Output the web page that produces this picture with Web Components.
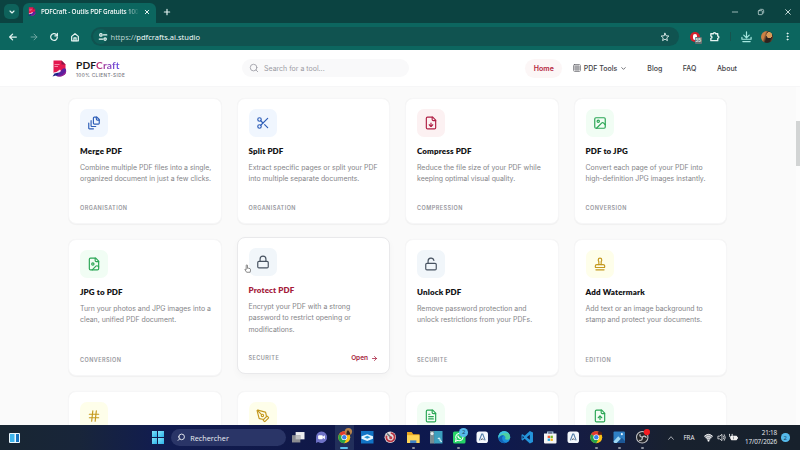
<!DOCTYPE html>
<html lang="fr">
<head>
<meta charset="utf-8">
<title>PDFCraft - Outils PDF Gratuits</title>
<style>
    html, body { margin: 0; height: 100%; overflow: hidden; }
    body {
        display: flex;
        flex-direction: column;
        width: 800px;
        height: 450px;
        font-family: Inter, "Liberation Sans", sans-serif;
        background: #fafafa;
    }
</style>
</head>
<body>
<browser-bar></browser-bar>
<site-header></site-header>
<tool-grid>
    <tool-card icon="merge" tone="blue" tag="ORGANISATION"><span slot="title">Merge PDF</span>Combine multiple PDF files into a single, organized document in just a few clicks.</tool-card>
    <tool-card icon="scissors" tone="blue" tag="ORGANISATION"><span slot="title">Split PDF</span>Extract specific pages or split your PDF into multiple separate documents.</tool-card>
    <tool-card icon="filedown" tone="red" tag="COMPRESSION"><span slot="title">Compress PDF</span>Reduce the file size of your PDF while keeping optimal visual quality.</tool-card>
    <tool-card icon="image" tone="green" tag="CONVERSION"><span slot="title">PDF to JPG</span>Convert each page of your PDF into high-definition JPG images instantly.</tool-card>
    <tool-card icon="fileimage" tone="green" tag="CONVERSION"><span slot="title">JPG to PDF</span>Turn your photos and JPG images into a clean, unified PDF document.</tool-card>
    <tool-card icon="lock" tone="slate" tag="SECURITE" active><span slot="title">Protect PDF</span>Encrypt your PDF with a strong password to restrict opening or modifications.</tool-card>
    <tool-card icon="unlock" tone="slate" tag="SECURITE"><span slot="title">Unlock PDF</span>Remove password protection and unlock restrictions from your PDFs.</tool-card>
    <tool-card icon="stamp" tone="yellow" tag="EDITION"><span slot="title">Add Watermark</span>Add text or an image background to stamp and protect your documents.</tool-card>
    <tool-card icon="hash" tone="yellow"></tool-card>
    <tool-card icon="pen" tone="yellow"></tool-card>
    <tool-card icon="filetext" tone="green"></tool-card>
    <tool-card icon="fileup" tone="green"></tool-card>
</tool-grid>
<task-bar></task-bar>

<script>
const FILE = '<path d="M15 2H6a2 2 0 0 0-2 2v16a2 2 0 0 0 2 2h12a2 2 0 0 0 2-2V7Z"/><path d="M14 2v4a2 2 0 0 0 2 2h4"/>'

// line icons, all on a 24x24 grid
const ICONS = {
    merge: '<path d="M21 7h-3a2 2 0 0 1-2-2V2"/><path d="M21 6v6.500c0 .8-.7 1.500-1.500 1.500h-7c-.8 0-1.500-.7-1.500-1.500v-9c0-.8.7-1.500 1.500-1.500H17Z"/><path d="M7 8v8.800c0 .3.2.6.4.8.2.2.5.4.8.4H15"/><path d="M3 12v8.800c0 .3.2.6.4.8.2.2.5.4.8.4H11"/>',
    scissors: '<circle cx="6" cy="6" r="3"/><path d="M8.120 8.120 12 12"/><path d="M20 4 8.120 15.880"/><circle cx="6" cy="18" r="3"/><path d="M14.800 14.800 20 20"/>',
    filedown: FILE + '<path d="M12 18v-6"/><path d="m9 15 3 3 3-3"/>',
    fileup: FILE + '<path d="M12 12v6"/><path d="m15 15-3-3-3 3"/>',
    filetext: FILE + '<path d="M10 9H8M16 13H8M16 17H8"/>',
    fileimage: FILE + '<circle cx="10" cy="12" r="2"/><path d="m20 17-1.300-1.300a2.400 2.400 0 0 0-3.400 0L9 22"/>',
    image: '<rect x="3" y="3" width="18" height="18" rx="2"/><circle cx="9" cy="9" r="2"/><path d="m21 15-3.090-3.090a2 2 0 0 0-2.820 0L6 21"/>',
    lock: '<rect x="3" y="11" width="18" height="11" rx="2"/><path d="M7 11V7a5 5 0 0 1 10 0v4"/>',
    unlock: '<rect x="3" y="11" width="18" height="11" rx="2"/><path d="M7 11V7a5 5 0 0 1 9.900-1"/>',
    stamp: '<path d="M5 22h14"/><path d="M19.270 13.730A2.500 2.500 0 0 0 17.500 13h-11A2.500 2.500 0 0 0 4 15.500V17a1 1 0 0 0 1 1h14a1 1 0 0 0 1-1v-1.500c0-.66-.26-1.300-.73-1.770Z"/><path d="M14 13V8.500C14 7 15 7 15 5a3 3 0 0 0-6 0c0 2 1 2 1 3.500V13"/>',
    hash: '<path d="M4 9h16M4 15h16M10 3 8 21M16 3l-2 18"/>',
    pen: '<path d="M15.700 21.300a1 1 0 0 1-1.400 0l-1.600-1.600a1 1 0 0 1 0-1.400l5.600-5.600a1 1 0 0 1 1.400 0l1.600 1.600a1 1 0 0 1 0 1.400z"/><path d="m18 13-1.400-6.900a1 1 0 0 0-.7-.8L3.200 2a1 1 0 0 0-1.200 1.200l3.300 12.700a1 1 0 0 0 .8.700L13 18"/><path d="m2.300 2.300 7.300 7.300"/><circle cx="11" cy="11" r="2"/>',
    search: '<circle cx="11" cy="11" r="8"/><path d="m21 21-4.300-4.300"/>',
    grid: '<rect x="2" y="2" width="20" height="20" rx="2"/><path d="M2 9h20M2 15h20M9 2v20M15 2v20"/>',
    down: '<path d="m6 9 6 6 6-6"/>',
    up: '<path d="m5 16 7-8 7 8"/>',
    right: '<path d="M5 12h14M12 5l7 7-7 7"/>',
    back: '<path d="M20 12H4M11 5l-7 7 7 7"/>',
    reload: '<path d="M20 12a8 8 0 1 1-2.500-5.800L20 8.500"/><path d="M20 3v6h-6"/>',
    home: '<path d="M4 10.500 12 4l8 6.500V21H4Z"/><path d="M9.500 21v-7h5v7"/>',
    tune: '<circle cx="7" cy="7" r="3"/><path d="M13 7h8M3 17h8"/><circle cx="17" cy="17" r="3"/>',
    star: '<path d="m12 3 2.700 6.100 6.600.6-5 4.400 1.500 6.500-5.800-3.400-5.800 3.400 1.500-6.500-5-4.400 6.600-.6Z"/>',
    close: '<path d="M5 5l14 14M19 5 5 19"/>',
    plus: '<path d="M12 4v16M4 12h16"/>',
    minus: '<path d="M4 12h16"/>',
    restore: '<rect x="4" y="8" width="12" height="12" rx="2"/><path d="M8 5c1-1 2-1 3-1h5a4 4 0 0 1 4 4v6c0 1 0 1-1 2"/>',
    puzzle: '<path d="M4 6h5.500a2.500 2.500 0 0 1 5 0H19v5a2.500 2.500 0 0 1 0 5v5H4v-5a2.500 2.500 0 0 0 0-5Z"/>',
    download: '<path d="M12 2v12M6 9l6 6 6-6M2 14v4h20v-4M4 23h16"/>',
    dots: '<g fill="currentColor"><circle cx="12" cy="4" r="1.500"/><circle cx="12" cy="12" r="1.500"/><circle cx="12" cy="20" r="1.500"/></g>'
}

class LineIcon extends HTMLElement {
    constructor() {
        super()
        this.attachShadow({ mode: 'open' })
    }
    connectedCallback() {
        const size = this.getAttribute('size') || 14
        const weight = this.getAttribute('weight') || 2
        this.shadowRoot.innerHTML = `<style>
            :host { display: inline-flex; flex: none; width: ${size}px; height: ${size}px; }
            svg { width: 100%; height: 100%; display: block; overflow: visible; }
        </style>
        <svg viewBox="0 0 24 24" fill="none" stroke="currentColor" stroke-width="${weight}" stroke-linecap="round" stroke-linejoin="round">${ICONS[this.getAttribute('name')]}</svg>`
    }
}
customElements.define('line-icon', LineIcon)


class PdfLogo extends HTMLElement {
    constructor() {
        super()
        this.attachShadow({ mode: 'open' }).innerHTML = `<style>
            :host { display: block; flex: none; width: 15px; height: 17px; }
            svg { width: 100%; height: 100%; display: block; }
        </style>
        <svg viewBox="0 0 30 34">
            <path d="M3 1h16l8 8v17H3Z" fill="#e3184f"/>
            <path d="M19 1l8 8h-8Z" fill="#8d1546"/>
            <path d="M5 9h10M5 13h7" stroke="#f9a3ba" stroke-width="1.600"/>
            <path d="M3 26q10 2 18-8 5-3 7 1 2 8-6 12-6 3-13 1Z" fill="#5b1f9e"/>
            <path d="M9 32q13 1 19-11 1 8-7 11-6 2-12 0Z" fill="#9a2294"/>
            <path d="M3 25q7 0 13-6l2 3q-5 6-13 7Z" fill="#f6eefa"/>
            <path d="M1 33l4-6 9-2-3 5Z" fill="#1d2585"/>
        </svg>`
    }
}
customElements.define('pdf-logo', PdfLogo)


class BrowserBar extends HTMLElement {
    constructor() {
        super()
        this.attachShadow({ mode: 'open' }).innerHTML = `<style>
            :host { display: block; flex: none; height: 50px; background: #0b4341; color: #e4f3f1; font-family: "Noto Sans", "Open Sans", sans-serif; }
            .strip { display: flex; align-items: center; height: 23px; box-sizing: border-box; padding: 0 8.500px 0 4px; }
            .tabs { width: 15px; height: 15px; border-radius: 5px; background: #0e625b; display: flex; align-items: center; justify-content: center; }
            .tab { display: flex; align-items: center; align-self: flex-end; box-sizing: border-box; width: 133px; height: 20px; margin-left: 4px; padding: 0 6px 3px 5px; border-radius: 6px 6px 0 0; background: #0c665f; }
            .tab pdf-logo { width: 8px; height: 9px; }
            .name { flex: 1; margin: 0 5px 0 5px; font-size: 6.400px; line-height: 10px; letter-spacing: -.16px; font-weight: 500; white-space: nowrap; color: #fff; -webkit-mask: linear-gradient(90deg, #000 86%, transparent); }
            .plus { margin-left: 7px; }
            .win { margin-left: auto; display: flex; align-items: center; gap: 18.500px; }
            .tools { display: flex; align-items: center; height: 27px; box-sizing: border-box; padding: 0 8px 0 8px; background: #0c665f; }
            .dim { opacity: .45; }
            .nav { display: flex; gap: 10.500px; }
            .url { display: flex; align-items: center; flex: none; width: 588px; height: 19px; box-sizing: border-box; margin-left: 11px; padding: 0 9px 0 2px; border-radius: 10px; background: #105350; font-size: 7.500px; color: #f2fbfa; }
            .site { display: flex; width: 15px; height: 15px; border-radius: 50%; background: #0e605a; align-items: center; justify-content: center; margin-right: 3px; }
            .url b { font-weight: 400; color: #b9d2cf; }
            .url line-icon:last-child { margin-left: auto; }
            .block { position: relative; width: 10px; height: 10px; margin-left: 11px; border-radius: 50%; background: #d5202c; }
            .block::before { content: ""; position: absolute; left: 3px; top: 2px; width: 4px; height: 6px; border-radius: 2px; background: #fff; }
            .block i { position: absolute; left: 5px; top: 5px; padding: 0 1px; font: bold 5px/7px "Liberation Sans", sans-serif; background: #657274; border-radius: 1px; }
            .sep { width: 1px; height: 9px; margin: 0 10px; background: #17534e; }
            .face { width: 12px; height: 12px; margin: 0 10px 0 9px; border-radius: 50%; background: radial-gradient(circle at 70% 35%, #d99b58 0 25%, transparent 27%), linear-gradient(110deg, #cc8044 0 30%, #2d211e 50% 75%, #a66235); }
        </style>
        <div class="strip">
            <div class="tabs"><line-icon name="down" size="8" weight="3.500"></line-icon></div>
            <div class="tab"><pdf-logo></pdf-logo><div class="name">PDFCraft - Outils PDF Gratuits 100</div><line-icon name="close" size="6" weight="4"></line-icon></div>
            <line-icon class="plus" name="plus" size="8" weight="3.500"></line-icon>
            <div class="win"><line-icon name="minus" size="8"></line-icon><line-icon name="restore" size="8"></line-icon><line-icon name="close" size="8" weight="2.500"></line-icon></div>
        </div>
        <div class="tools">
            <div class="nav"><line-icon name="back" size="10" weight="3"></line-icon><line-icon class="dim" name="right" size="10" weight="2.400"></line-icon><line-icon name="reload" size="10" weight="3"></line-icon><line-icon name="home" size="10" weight="3"></line-icon></div>
            <div class="url"><span class="site"><line-icon name="tune" size="10" weight="2.800"></line-icon></span><span><b>https://</b>pdfcrafts.ai.studio</span><line-icon name="star" size="10"></line-icon></div>
            <div class="block"><i>55</i></div>
            <line-icon style="margin-left:9px" name="puzzle" size="11" weight="3"></line-icon>
            <div class="sep"></div>
            <line-icon name="download" size="11" weight="2.600" style="color:#a5e8e0"></line-icon>
            <div class="face"></div>
            <line-icon name="dots" size="9"></line-icon>
        </div>`
    }
}
customElements.define('browser-bar', BrowserBar)


class SiteHeader extends HTMLElement {
    constructor() {
        super()
        this.attachShadow({ mode: 'open' }).innerHTML = `<style>
            :host { display: flex; flex: none; align-items: center; height: 37px; box-sizing: border-box; padding: 0 63px 0 52px; background: #fff; border-bottom: 1px solid #f6f6f7; color: #3f3f46; font-size: 7px; font-weight: 500; }
            .brand { width: 184px; display: flex; align-items: center; gap: 9px; padding-top: 1.500px; }
            .name { font: 700 10.200px/12px Lato, sans-serif; letter-spacing: .1px; color: #18181b; }
            .name span { background: linear-gradient(90deg, #c72a62, #8f43b8 50%, #6453e6); -webkit-background-clip: text; color: transparent; }
            .sub { margin-top: 1px; font-size: 4.700px; line-height: 6px; letter-spacing: .38px; color: #71717a; white-space: nowrap; }
            .search { display: flex; align-items: center; gap: 5px; width: 167px; height: 18px; box-sizing: border-box; margin-left: 6px; padding-left: 7px; border-radius: 9px; background: #f9f9fa; color: #9b9ba3; font-weight: 400; font-size: 7px; }
            nav { margin-left: auto; display: flex; align-items: center; }
            .home { padding: 0 8.500px; line-height: 19px; border-radius: 10px; background: #fcf6f6; color: #b51f3d; font-weight: 600; }
            .drop { display: flex; align-items: center; gap: 2.500px; margin: 0 20px 0 11px; }
            .drop line-icon:last-child { margin-left: .5px; }
            .faq { margin: 0 20.500px; }
        </style>
        <div class="brand"><pdf-logo></pdf-logo><div><div class="name">PDF<span>Craft</span></div><div class="sub">100% CLIENT-SIDE</div></div></div>
        <div class="search"><line-icon name="search" size="10"></line-icon>Search for a tool...</div>
        <nav><span class="home">Home</span><span class="drop"><line-icon name="grid" size="8" weight="1.600"></line-icon>PDF Tools<line-icon name="down" size="7" weight="2.500"></line-icon></span><span>Blog</span><span class="faq">FAQ</span><span>About</span></nav>`
    }
}
customElements.define('site-header', SiteHeader)


class ToolGrid extends HTMLElement {
    constructor() {
        super()
        this.attachShadow({ mode: 'open' }).innerHTML = `<style>
            :host { display: flex; flex: 1; min-height: 0; overflow: hidden; background: #fafafa; }
            .grid { flex: 1; display: grid; grid-template-columns: repeat(4, 153.500px); grid-template-rows: 126px 137px 126px; gap: 15px; align-content: start; padding: 11px 0 0 68px; }
            .scroll { width: 4px; background: #fcfcfc; padding-top: 34px; box-sizing: border-box; }
            .thumb { height: 45px; background: #d2d4d4; }
        </style>
        <div class="grid"><slot></slot></div>
        <div class="scroll"><div class="thumb"></div></div>`
    }
}
customElements.define('tool-grid', ToolGrid)


const TONES = {
    blue: ['#2f5fb8', '#f0f6fe'],
    red: ['#b02045', '#fcf1f2'],
    green: ['#2ba655', '#f1fdf4'],
    slate: ['#475260', '#f1f6fa'],
    yellow: ['#c4991f', '#fefeea']
}

class ToolCard extends HTMLElement {
    constructor() {
        super()
        this.attachShadow({ mode: 'open' })
    }
    connectedCallback() {
        const [ink, tile] = TONES[this.getAttribute('tone')]
        const active = this.hasAttribute('active')
        this.shadowRoot.innerHTML = `<style>
            :host { position: relative; display: flex; flex-direction: column; box-sizing: border-box; padding: 10px 8px 11px 11px; border: 1px solid #f6f6f7; border-radius: 8px; background: #fff; box-shadow: 0 .5px 1px rgba(0,0,0,.04); }
            :host([active]) { top: -2px; border-color: #e9e9eb; box-shadow: 0 3px 7px rgba(0,0,0,.03); }
            .tile { display: flex; align-items: center; justify-content: center; width: 28px; height: 28px; border-radius: 7px; color: ${ink}; background: ${tile}; }
            .title { margin-top: 8px; font: 800 8px/12px Lato, sans-serif; letter-spacing: .13px; color: #121214; white-space: nowrap; }
            :host([active]) .title { color: #a51c3b; }
            .text { margin-top: 5px; font-size: 6.930px; line-height: 11.300px; color: #858589; }
            .foot { display: flex; align-items: center; justify-content: space-between; margin-top: auto; font-size: 5.500px; line-height: 8px; font-weight: 600; letter-spacing: .45px; color: #97979d; }
            .open { display: flex; align-items: center; gap: 3px; margin-right: 3px; font-size: 6.500px; letter-spacing: 0; color: #a51c3b; }
            .hand { position: absolute; left: 6.500px; top: 26px; width: 7px; height: 9.500px; }
        </style>
        <div class="tile"><line-icon name="${this.getAttribute('icon')}" size="14"></line-icon></div>
        <div class="title"><slot name="title"></slot></div>
        <div class="text"><slot></slot></div>
        <div class="foot"><span>${this.getAttribute('tag') || ''}</span>${active ? '<span class="open">Open<line-icon name="right" size="7" weight="2.600"></line-icon></span>' : ''}</div>
        ${active ? '<svg class="hand" viewBox="0 0 16 20"><path d="M5 12V3q0-2 1.500-2T8 3v6q3-1 6 1 1 1 1 3l-1 5H6L2 12q0-2 3 0Z" fill="#fff" stroke="#444" stroke-width="1.400"/></svg>' : ''}`
    }
}
customElements.define('tool-card', ToolCard)


const CHROME = '<circle cx="12" cy="12" r="11.500" fill="#fbc116"/><path d="M12 12 2.200 6a11.500 11.500 0 0 1 19.600 0Z" fill="#e33b2e"/><path d="M12 12 2.200 6A11.500 11.500 0 0 0 12 23.500l4-7.500Z" fill="#27a34b"/><circle cx="12" cy="12" r="5.500" fill="#fff"/><circle cx="12" cy="12" r="4.200" fill="#3b82e8"/>'
const LETTER = '<rect x="1" y="1" width="22" height="22" rx="5" fill="#f4f8fd"/><path d="m6.500 18 4.500-12h2l4.500 12" fill="none" stroke="#5880aa" stroke-width="2.200"/><path d="m9.500 17.500 2.500-3 2.500 3" fill="none" stroke="#38424e" stroke-width="1.500"/>'

// [picture, state] of every pinned app, left to right
const APPS = [
    ['<rect x="7" y="2" width="17" height="14" fill="#eeeeef"/><rect x="0" y="8" width="16" height="14" fill="#8b8c91"/><rect x="7" y="8" width="9" height="8" fill="#bfc0c2"/>'],
    ['<path d="M12 1a11 11 0 1 1-6 20l-4 2V12A11 11 0 0 1 12 1Z" fill="#6f72c6"/><rect x="6" y="8" width="9" height="8" rx="2" fill="#fff"/><path d="m15 11 4-3v8l-4-3Z" fill="#fff"/>'],
    [CHROME + '<circle cx="20" cy="1" r="7" fill="#b7834b"/><path d="M16 7q0-7 3-9 4 3 5 9Z" fill="#31241f"/>', 'on'],
    ['<rect width="24" height="24" fill="#1274c5"/><path d="m1 10 11-4 11 4v5l-11 4-11-4Z" fill="#e3f5ff"/><path d="m6 12 6-3 6 3-6 3Z" fill="#2793d1"/>'],
    ['<circle cx="12" cy="12" r="11" fill="#e3dfe0"/><path d="M5 9a8 8 0 1 0 8-5" fill="none" stroke="#b93543" stroke-width="3.500"/><path d="m6 5 7 7" stroke="#6a7378" stroke-width="3"/><circle cx="13" cy="13" r="3" fill="#c23a47"/>'],
    ['<path d="M0 2h9l3 4h12v17H0Z" fill="#eaa620"/><path d="M0 8h24v15H0Z" fill="#ffd557"/><rect x="6" y="18" width="12" height="5" fill="#3d82c8"/>', 'run'],
    ['<rect width="9" height="24" fill="#7a8c91"/><rect x="8" width="16" height="24" fill="#3b9fbe"/><circle cx="4" cy="5" r="3" fill="#e6edef"/><path d="M15 15q4-3 4 1t4 4" stroke="#d5f1f7" stroke-width="2" fill="none"/>'],
    ['<rect y="1" width="24" height="23" rx="3" fill="#25d366"/><path d="m5 20 1-5a7 7 0 1 1 3 3Z" fill="none" stroke="#fff" stroke-width="2"/><path d="M9 9q1 5 6 6" stroke="#fff" stroke-width="2.500" fill="none"/>', 'run', '2'],
    [LETTER],
    ['<circle cx="12" cy="12" r="11.500" fill="#1b8fdc"/><path d="M1 9Q4 0 13 .5 23 2 23.500 12q-1 6-8 4.500-3-1-1-3.500Q14 8 9 8 4 8 1 13Z" fill="#4ed0a0"/><path d="M1 9Q4 0 13 .5q5 .5 8 5Q15 2 9 5 3 8 1 13Z" fill="#3cc3e6"/><path d="M8 12q-1 9 8 10.500Q8 25 3 19 0 13 4 10q4-3 8-1-3 0-4 3Z" fill="#1263b8"/>'],
    ['<path d="m17 0 6 3v18l-6 3L7 15l-4 3-2-1V7l2-1 4 3Zm0 7-6 5 6 5ZM3 9v6l3-3Z" fill="#2494dc" fill-rule="evenodd"/>'],
    ['<path d="M7 6V2h10v4" fill="none" stroke="#b9d7eb" stroke-width="2"/><path d="M0 5h24v17q0 2-2 2H2q-2 0-2-2Z" fill="#f4f5f6"/><path d="M7 9h4.500v4.500H7Z" fill="#ef5b35"/><path d="M12.500 9H17v4.500h-4.500Z" fill="#78b72b"/><path d="M7 14.500h4.500V19H7Z" fill="#29a7df"/><path d="M12.500 14.500H17V19h-4.500Z" fill="#f5b51d"/>'],
    [LETTER],
    [CHROME + '<path d="M15 3q4-4 8 0v4h-7Z" fill="#542019"/>', 'run'],
    ['<rect x="1" y="1" width="22" height="22" rx="2" fill="#2f7fc4"/><path d="m1 20 9-10 13 13H3Z" fill="#a0d8f4"/><path d="m7 23 10-10 6 6v4Z" fill="#1c5695"/><circle cx="17" cy="6" r="2" fill="#e8f7ff"/>', 'run'],
    ['<circle cx="12" cy="12" r="11" fill="#25262b" stroke="#c5c5c8" stroke-width="2"/><path d="M12 12q-6-1-4-6M12 12q5-5 8 1M12 12q1 7-6 6" fill="none" stroke="#c5c5c8" stroke-width="2.400"/><circle cx="21" cy="2" r="6" fill="#f51d22"/>', 'run']
]

class TaskBar extends HTMLElement {
    constructor() {
        super()
        const apps = APPS.map(([art, state = '', badge]) =>
            `<div class="app ${state}"><svg viewBox="0 0 24 24" overflow="visible">${art}</svg>${badge ? `<b>${badge}</b>` : ''}</div>`).join('')
        this.attachShadow({ mode: 'open' }).innerHTML = `<style>
            :host { display: flex; flex: none; align-items: center; height: 25px; color: #edf0f4; background: linear-gradient(90deg, #182632, #18253a 10%, #111c50 20%, #101848 40%, #0d1950 60%, #171d3e 76%, #18212e 84%, #17212c); font-family: "Open Sans", "Noto Sans", sans-serif; }
            .widget { width: 11px; height: 10px; margin-left: 9px; }
            .start { display: grid; grid-template-columns: 5.700px 5.700px; grid-auto-rows: 5.700px; gap: .8px; margin-left: 131.500px; }
            .start i { background: linear-gradient(135deg, #83e5fa, #2bb1e8); }
            .search { display: flex; align-items: center; box-sizing: border-box; gap: 5px; width: 115px; height: 17px; margin-left: 7px; padding-left: 6px; border-radius: 9px; background: #2a3567; font-size: 7.300px; }
            .search line-icon { transform: scaleX(-1); }
            .apps { display: flex; margin-left: 1.300px; }
            .app { position: relative; width: 22.930px; height: 25px; display: flex; align-items: center; justify-content: center; }
            .app svg { width: 12.500px; height: 12.500px; }
            .on { border-radius: 3px; background: linear-gradient(90deg, transparent 8%, #222f5b 8% 92%, transparent 92%); }
            .on::after, .run::after { content: ""; position: absolute; bottom: 1.500px; left: 50%; width: 3px; height: 1.500px; margin-left: -1.500px; border-radius: 1px; background: #8c929f; }
            .on::after { width: 8px; margin-left: -4px; background: #5bc1ef; }
            b { display: flex; align-items: center; justify-content: center; width: 8.500px; height: 8.500px; border-radius: 50%; font-size: 6px; font-weight: 400; background: #55b9e9; color: #11385a; }
            .app b { position: absolute; left: 12px; top: 3px; }
            .tray { display: flex; align-items: center; margin-left: auto; padding-right: 10.500px; font-size: 6.300px; }
            .tray svg { width: 9px; height: 9px; display: block; }
            .fra { margin: 0 9.500px 0 8px; }
            .status { display: flex; gap: 3.500px; }
            .clock { width: 39px; text-align: right; line-height: 8.500px; letter-spacing: -.15px; margin-right: 4px; }
        </style>
        <svg class="widget" viewBox="0 0 22 20"><rect width="22" height="20" rx="2" fill="#eaf7fc"/><rect x="2" y="2" width="9" height="16" fill="#3fb6ec"/><rect x="14" y="2" width="6" height="16" fill="#1673be"/></svg>
        <div class="start"><i></i><i></i><i></i><i></i></div>
        <div class="search"><line-icon name="search" size="8.500" weight="2.600"></line-icon>Rechercher</div>
        <div class="apps">${apps}</div>
        <div class="tray">
            <line-icon name="up" size="8"></line-icon>
            <span class="fra">FRA</span>
            <div class="status">
                <svg viewBox="0 0 20 20"><path d="M0 7q10-9 20 0L10 19Z" fill="#8c9199"/><path d="M1 7q9-8 18 0M4 10q6-5 12 0M7 13q3-3 6 0" fill="none" stroke="#fff" stroke-width="2"/><circle cx="10" cy="17" r="2" fill="#fff"/></svg>
                <svg viewBox="0 0 20 20"><path d="M2 7h4l5-4v14l-5-4H2ZM14 6q3 4 0 8M16 3q5 7 0 14" fill="none" stroke="#fff" stroke-width="1.600"/></svg>
                <svg viewBox="0 0 20 20"><rect x="4" y="6" width="14" height="10" rx="2" fill="#eee"/><path d="M19 9v4" stroke="#fff" stroke-width="2"/><path d="M1 2v4q0 3 3 3t3-3V2M4 9v4" stroke="#fff" stroke-width="2" fill="none"/><path d="M10 8v6" stroke="#26303a"/></svg>
            </div>
            <div class="clock">21:18<br>17/07/2026</div>
            <b>2</b>
        </div>`
    }
}
customElements.define('task-bar', TaskBar)
</script>
</body>
</html>
